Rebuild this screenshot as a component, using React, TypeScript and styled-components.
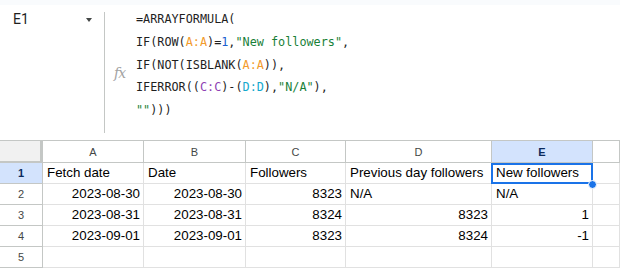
import React from 'react';
import styled, {createGlobalStyle} from "styled-components";

const GlobalStyle = createGlobalStyle`
  body {
    margin: 0;
    background: #ffffff;
  }
`

const columns = ['A', 'B', 'C', 'D', 'E', '']

type Row = { num: number, cells: Array<{ text: string, right?: boolean }> }

const rows: Array<Row> = [
    {num: 1, cells: [{text: 'Fetch date'}, {text: 'Date'}, {text: 'Followers'}, {text: 'Previous day followers'}, {text: 'New followers'}, {text: ''}]},
    {num: 2, cells: [{text: '2023-08-30', right: true}, {text: '2023-08-30', right: true}, {text: '8323', right: true}, {text: 'N/A'}, {text: 'N/A'}, {text: ''}]},
    {num: 3, cells: [{text: '2023-08-31', right: true}, {text: '2023-08-31', right: true}, {text: '8324', right: true}, {text: '8323', right: true}, {text: '1', right: true}, {text: ''}]},
    {num: 4, cells: [{text: '2023-09-01', right: true}, {text: '2023-09-01', right: true}, {text: '8323', right: true}, {text: '8324', right: true}, {text: '-1', right: true}, {text: ''}]},
    {num: 5, cells: [{text: ''}, {text: ''}, {text: ''}, {text: ''}, {text: ''}, {text: ''}]},
]

export default function App() {
    return (
        <>
            <GlobalStyle/>
            <Page>
                <TopStrip/>
                <FormulaBar>
                    <NameBox>
                        <span>E1</span>
                        <DropArrow/>
                    </NameBox>
                    <Divider/>
                    <FxBox>fx</FxBox>
                    <Formula>
                        <Line>=ARRAYFORMULA(</Line>
                        <Line>IF(ROW(<Tok $c="#f29b2c">A:A</Tok>)=<Tok $c="#1a5fd0">1</Tok>,<Tok $c="#188038">"New followers"</Tok>,</Line>
                        <Line>IF(NOT(ISBLANK(<Tok $c="#f29b2c">A:A</Tok>)),</Line>
                        <Line>IFERROR((<Tok $c="#8e3fb3">C:C</Tok>)-(<Tok $c="#13a8cd">D:D</Tok>),<Tok $c="#188038">"N/A"</Tok>),</Line>
                        <Line><Tok $c="#188038">""</Tok>)))</Line>
                    </Formula>
                </FormulaBar>
                <Sheet>
                    <Corner/>
                    {columns.map((col) => (
                        <ColHeader key={col || 'F'} $selected={col === 'E'}>{col}</ColHeader>
                    ))}
                    {rows.map((row) => (
                        <React.Fragment key={row.num}>
                            <RowHeader $selected={row.num === 1}>{row.num}</RowHeader>
                            {row.cells.map((cell, index) => (
                                <Cell key={index} $right={cell.right}>
                                    {cell.text}
                                    {row.num === 1 && index === 4 && (
                                        <Selection>
                                            <Handle/>
                                        </Selection>
                                    )}
                                </Cell>
                            ))}
                        </React.Fragment>
                    ))}
                </Sheet>
            </Page>
        </>
    );
}

const Page = styled.div`
  width: 620px;
  height: 270px;
  overflow: hidden;
  background: #ffffff;
`

const TopStrip = styled.div`
  height: 5px;
  background: #f9fbfd;
`

const FormulaBar = styled.div`
  display: flex;
  height: 135px;
`

const NameBox = styled.div`
  width: 104px;
  box-sizing: border-box;
  display: flex;
  justify-content: space-between;
  align-items: flex-start;
  padding: 3px 12px 0 13px;
  font-family: Roboto, "Liberation Sans", sans-serif;
  font-size: 14px;
  line-height: 23px;
  color: #1f1f1f;
`

const DropArrow = styled.span`
  margin-top: 10px;
  width: 0;
  height: 0;
  border-left: 3.5px solid transparent;
  border-right: 3.5px solid transparent;
  border-top: 4px solid #444746;
`

const Divider = styled.div`
  width: 1px;
  margin: 7px 0;
  background: #c4c7c5;
`

const FxBox = styled.div`
  width: 31px;
  box-sizing: border-box;
  display: flex;
  align-items: center;
  padding-left: 9px;
  font-family: "DejaVu Serif", serif;
  font-style: italic;
  font-size: 14px;
  letter-spacing: -1px;
  color: #a3a3a3;
`

const Formula = styled.div`
  padding-top: 3px;
  font-family: "DejaVu Sans Mono", "Liberation Mono", monospace;
  font-size: 11.8px;
  color: #1f1f1f;
`

const Line = styled.div`
  height: 22.8px;
  line-height: 22.8px;
  white-space: pre;
`

const Tok = styled.span<{ $c: string }>`
  color: ${p => p.$c};
`

const Sheet = styled.div`
  display: grid;
  grid-template-columns: 43px 101px 102px 100px 146px 101px 1fr;
  grid-template-rows: 22px repeat(5, 21px);
  border-top: 1px solid #c4c7c5;
  font-family: "Liberation Sans", Arial, sans-serif;
`

const Corner = styled.div`
  background: #f1f1f1;
  border-right: 3px solid #c4c7c5;
  border-bottom: 2px solid #c4c7c5;
`

const ColHeader = styled.div<{ $selected?: boolean }>`
  display: flex;
  align-items: center;
  justify-content: center;
  background: ${p => p.$selected ? '#d3e3fd' : '#ffffff'};
  border-right: 1px solid #c4c7c5;
  border-bottom: 1px solid #c4c7c5;
  font-size: 11px;
  font-weight: ${p => p.$selected ? 700 : 400};
  color: ${p => p.$selected ? '#0b2a5c' : '#444746'};
`

const RowHeader = styled.div<{ $selected?: boolean }>`
  display: flex;
  align-items: center;
  justify-content: center;
  background: ${p => p.$selected ? '#d3e3fd' : '#ffffff'};
  border-right: 1px solid #c4c7c5;
  border-bottom: 1px solid #c4c7c5;
  font-size: 11px;
  font-weight: ${p => p.$selected ? 700 : 400};
  color: ${p => p.$selected ? '#0b2a5c' : '#444746'};
`

const Cell = styled.div<{ $right?: boolean }>`
  position: relative;
  padding: 0 3px 0 4px;
  border-right: 1px solid #e1e1e1;
  border-bottom: 1px solid #e1e1e1;
  font-size: 13.33px;
  line-height: 20px;
  color: #000000;
  text-align: ${p => p.$right ? 'right' : 'left'};
  white-space: nowrap;
`

const Selection = styled.span`
  position: absolute;
  top: 0;
  left: -1px;
  right: -1px;
  bottom: -1px;
  border: 2px solid #1a73e8;
  z-index: 2;
`

const Handle = styled.span`
  position: absolute;
  right: -6px;
  bottom: -7px;
  width: 7px;
  height: 7px;
  border-radius: 50%;
  background: #1a73e8;
  border: 1px solid #ffffff;
`
